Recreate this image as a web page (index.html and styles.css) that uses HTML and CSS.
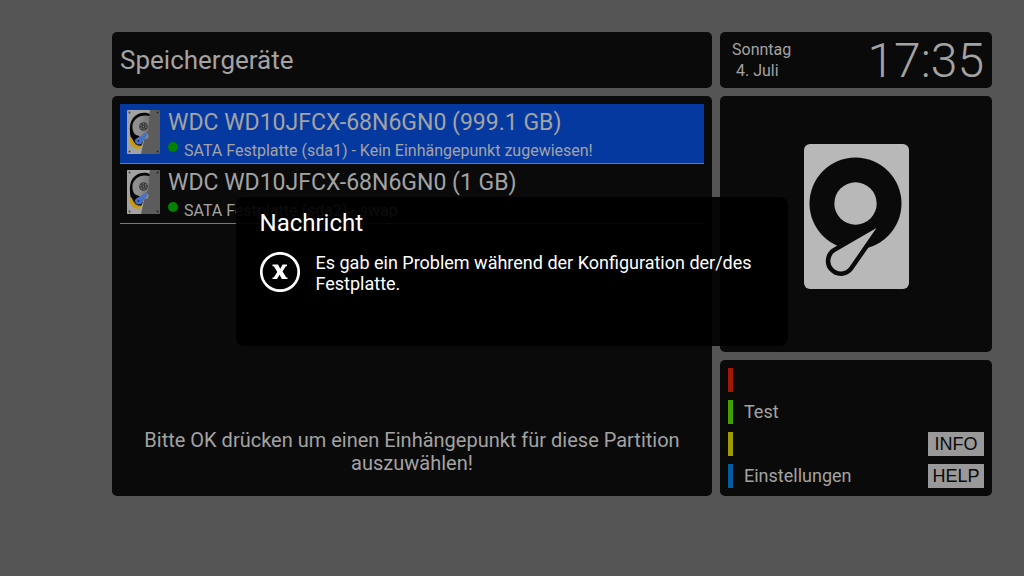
FILE: index.html
```html
<!DOCTYPE html>
<html lang="de">
<head>
<meta charset="UTF-8">
<title>Speichergeräte</title>
<link rel="stylesheet" href="styles.css">
</head>
<body>

<!-- Festplatten-Symbol für die Liste -->
<svg class="defs" aria-hidden="true">
  <linearGradient id="platter" x1="0" y1="0" x2="1" y2="0">
    <stop offset="0.3" stop-color="#909090"/>
    <stop offset="1" stop-color="#777"/>
  </linearGradient>
  <symbol id="drive" viewBox="0 0 33 44">
    <rect width="33" height="44" rx="1" fill="#5c5c5c"/>
    <path d="M1 0H23L21 12L14 44H1a1 1 0 0 1-1-1V1a1 1 0 0 1 1-1z" fill="#a2a2a2"/>
    <path d="M22.500 4C18 1.500 10 3 6 8C3 12 2.500 17 3 22C3 27 5 32 9 35L14 36L16 32L11 24L14 8L22.500 6z" fill="#050505"/>
    <path d="M22.500 6C13 3.500 6.500 9 5.500 15C5 21 7 25 11 25.500L14 27L19 23L21 20L22 12z" fill="url(#platter)"/>
    <path d="M3 27L5 28C6 32 9 35 14 36L12 39C6 38 3 35 3 31z" fill="#c99a08"/>
    <circle cx="18.500" cy="26" r="3" fill="#8b8b8b"/>
    <path d="M19 22L20.500 25L15 33C13 36 7 34 8 30C9 28 12 27 14 26z" fill="#4a70c4"/>
    <path d="M8 31C8 34 11 35 13 34.500L12 36L8 34z" fill="#12306e"/>
    <circle cx="11.500" cy="31" r="1" fill="#0c2f79"/>
    <circle cx="16.500" cy="16.500" r="4.300" fill="#383838"/>
    <circle cx="16.500" cy="16.500" r="2.700" fill="none" stroke="#777" stroke-width="1.200" stroke-dasharray="1.600 1.200"/>
    <circle cx="16.500" cy="16.500" r="0.700" fill="#888"/>
    <circle cx="2.500" cy="2.500" r="1" fill="#444"/>
    <circle cx="30.500" cy="2.500" r="1" fill="#222"/>
    <circle cx="2.500" cy="41.500" r="1" fill="#444"/>
    <circle cx="30.500" cy="41.500" r="1" fill="#222"/>
  </symbol>
</svg>

<main class="screen">
  <header class="panel title">
    <h1>Speichergeräte</h1>
  </header>

  <div class="panel clock">
    <div class="date">Sonntag<br>&nbsp;4. Juli</div>
    <time class="time" datetime="17:35">17:35</time>
  </div>

  <section class="panel devices">
    <ul class="device-list">
      <li class="device selected">
        <svg class="drive"><use href="#drive"/></svg>
        <div>
          <div class="device-name">WDC WD10JFCX-68N6GN0 (999.1 GB)</div>
          <div class="device-info"><span class="status"></span>SATA Festplatte (sda1) - Kein Einhängepunkt zugewiesen!</div>
        </div>
      </li>
      <li class="device">
        <svg class="drive"><use href="#drive"/></svg>
        <div>
          <div class="device-name">WDC WD10JFCX-68N6GN0 (1 GB)</div>
          <div class="device-info"><span class="status"></span>SATA Festplatte (sda2) - swap</div>
        </div>
      </li>
    </ul>
    <p class="hint">Bitte OK drücken um einen Einhängepunkt für diese Partition auszuwählen!</p>
  </section>

  <div class="side">
    <div class="panel preview">
      <svg width="105" height="145" viewBox="0 0 105 145" aria-hidden="true">
        <rect width="105" height="145" rx="6" fill="#b8b8b8"/>
        <circle cx="51.500" cy="59.500" r="46" fill="#0a0a0a"/>
        <circle cx="51.500" cy="59.500" r="21.200" fill="#b8b8b8"/>
        <path d="M80 77L30.300 105.900A12.800 12.800 0 1 0 47.300 124.300z" fill="#b8b8b8" stroke="#0a0a0a" stroke-width="4.500" stroke-linejoin="round"/>
      </svg>
    </div>

    <nav class="panel keys">
      <button class="key red" aria-label="Rot"></button>
      <button class="key green">Test</button>
      <button class="key yellow" aria-label="Gelb"></button>
      <button class="key info">INFO</button>
      <button class="key blue">Einstellungen</button>
      <button class="key info">HELP</button>
    </nav>
  </div>
</main>

<div class="message" role="alertdialog" aria-labelledby="message-title">
  <h2 id="message-title">Nachricht</h2>
  <div class="message-body">
    <svg width="40" height="40" viewBox="0 0 40 40" aria-hidden="true">
      <circle cx="20" cy="20" r="18.700" fill="none" stroke="#fff" stroke-width="2.700"/>
      <path d="M12.500 12.500H18L20.300 16.800L22.600 12.500H27V14.200H25.800L22.500 19.400L26.300 25.500H27.500V27H21.800L19.600 22.700L17 27H12.500V25.500H13.700L17.300 20L13.800 14.200H12.500z" fill="#fff"/>
    </svg>
    <p>Es gab ein Problem während der Konfiguration der/des Festplatte.</p>
  </div>
</div>

</body>
</html>
```
FILE: styles.css
```css
* {
  box-sizing: border-box;
}

body {
  margin: 0;
  min-height: 100vh;
  background: #555;
  color: #a3a3a3;
  font-family: Roboto, sans-serif;
}

h1, h2, p, ul {
  margin: 0;
  padding: 0;
  font-weight: 400;
}

.defs {
  position: absolute;
  width: 0;
  height: 0;
}

.screen {
  display: grid;
  grid-template-columns: 1fr 272px;
  grid-template-rows: 56px 1fr;
  gap: 8px;
  min-height: 100vh;
  padding: 32px 32px 80px 112px;
}

.panel {
  background: #0a0a0a;
  border-radius: 5px;
}

.title {
  display: flex;
  align-items: center;
  padding: 0 8px;
}

h1 {
  font-size: 26px;
}

.clock {
  display: flex;
  align-items: center;
  justify-content: space-between;
  padding: 0 8px 0 12px;
}

.date {
  font-size: 16px;
  line-height: 21px;
}

.time {
  font-size: 48px;
  font-weight: 300;
}

.devices {
  display: flex;
  flex-direction: column;
  justify-content: space-between;
  padding: 8px;
}

.device-list {
  list-style: none;
}

.device {
  display: flex;
  gap: 8px;
  height: 60px;
  padding: 4px 7px;
  border-bottom: 1px solid #777;
}

.selected {
  background: #06399f;
}

.drive {
  width: 33px;
  height: 44px;
  margin-top: 2px;
}

.device-name {
  font-size: 23px;
  line-height: 30px;
}

.device-info {
  display: flex;
  align-items: center;
  gap: 6px;
  font-size: 16px;
  line-height: 26px;
}

.status {
  width: 10px;
  height: 10px;
  margin-bottom: 8px;
  border-radius: 50%;
  background: #048204;
}

.hint {
  padding: 0 16px 13px;
  font-size: 20px;
  line-height: 23px;
  text-align: center;
}

.side {
  display: grid;
  grid-template-rows: 1fr 136px;
  gap: 8px;
}

.preview {
  display: flex;
  align-items: center;
  justify-content: center;
  padding-bottom: 16px;
}

.keys {
  display: grid;
  grid-template-columns: 1fr 56px;
  grid-auto-rows: 24px;
  gap: 8px;
  padding: 8px;
}

.key {
  padding: 0 0 0 11px;
  border: 0;
  border-left: 5px solid;
  background: none;
  color: #a3a3a3;
  font-family: inherit;
  font-size: 18px;
  line-height: 24px;
  text-align: left;
  cursor: pointer;
}

.red, .green {
  grid-column: 1 / -1;
}

.red {
  border-color: #a31705;
}

.green {
  border-color: #43a005;
}

.yellow {
  border-color: #a09b05;
}

.blue {
  border-color: #055aa0;
}

.info {
  padding: 0;
  border: 0;
  background: #999;
  color: #0a0a0a;
  font-family: "Liberation Sans", sans-serif;
  text-align: center;
}

.message {
  position: absolute;
  top: 197px;
  left: 23%;
  width: 54%;
  min-height: 149px;
  padding: 12px 24px;
  border-radius: 8px;
  background: rgba(0, 0, 0, 0.93);
  color: #fff;
}

h2 {
  font-size: 24px;
  line-height: 28px;
}

.message-body {
  display: flex;
  gap: 16px;
  margin-top: 15px;
}

.message-body svg {
  flex: none;
}

.message-body p {
  font-size: 18px;
  line-height: 21px;
}
```
